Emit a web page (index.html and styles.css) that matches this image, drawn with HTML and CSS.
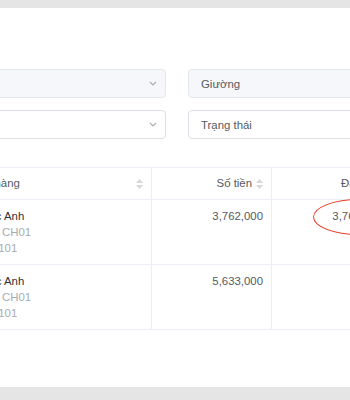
FILE: index.html
```html
<!DOCTYPE html>
<html lang="vi">
<head>
    <meta charset="UTF-8">
    <meta name="viewport" content="width=device-width, initial-scale=1.0">
    <title>Hợp đồng</title>
    <link rel="stylesheet" href="styles.css">
</head>
<body>
    <div class="panel">
        <div class="filters">
            <div class="select is-disabled">
                <span class="select-value"></span>
                <svg class="chevron" width="8" height="5" viewBox="0 0 8 5"><polyline points="1,1 4,4 7,1" fill="none" stroke="#a8abb2" stroke-width="1.1"/></svg>
            </div>
            <div class="field is-disabled">Giường</div>

            <div class="select">
                <span class="select-value"></span>
                <svg class="chevron" width="8" height="5" viewBox="0 0 8 5"><polyline points="1,1 4,4 7,1" fill="none" stroke="#a8abb2" stroke-width="1.1"/></svg>
            </div>
            <div class="field">Trạng thái</div>
        </div>

        <table class="data-table">
            <colgroup>
                <col class="col-customer">
                <col class="col-money">
                <col class="col-money">
                <col class="col-money">
            </colgroup>
            <thead>
                <tr>
                    <th>
                        <div class="th-inner">
                            <span>Khách hàng</span>
                            <svg class="sort" width="7" height="10" viewBox="0 0 7 10"><polygon points="3.5,0 7,4 0,4" fill="#d4d7de"/><polygon points="0,6 7,6 3.5,10" fill="#d4d7de"/></svg>
                        </div>
                    </th>
                    <th class="num">
                        <div class="th-inner">
                            <span>Số tiền</span>
                            <svg class="sort" width="7" height="10" viewBox="0 0 7 10"><polygon points="3.5,0 7,4 0,4" fill="#d4d7de"/><polygon points="0,6 7,6 3.5,10" fill="#d4d7de"/></svg>
                        </div>
                    </th>
                    <th class="num">
                        <div class="th-inner">
                            <span>Đã trả</span>
                            <svg class="sort" width="7" height="10" viewBox="0 0 7 10"><polygon points="3.5,0 7,4 0,4" fill="#d4d7de"/><polygon points="0,6 7,6 3.5,10" fill="#d4d7de"/></svg>
                        </div>
                    </th>
                    <th class="num"></th>
                </tr>
            </thead>
            <tbody>
                <tr>
                    <td>
                        <div class="name">Lê Ngọc Anh</div>
                        <div class="meta">Căn hộ: CH01</div>
                        <div class="meta">Phòng: 101</div>
                    </td>
                    <td class="num">3,762,000</td>
                    <td class="num marked">
                        3,762,000
                        <span class="ring"></span>
                    </td>
                    <td class="num"></td>
                </tr>
                <tr>
                    <td>
                        <div class="name">Lê Ngọc Anh</div>
                        <div class="meta">Căn hộ: CH01</div>
                        <div class="meta">Phòng: 101</div>
                    </td>
                    <td class="num">5,633,000</td>
                    <td class="num"></td>
                    <td class="num"></td>
                </tr>
            </tbody>
        </table>
    </div>
</body>
</html>
```

FILE: styles.css
```css
body {
    margin: 0;
    background-color: #e5e5e5;
    font-family: "Liberation Sans", Arial, sans-serif;
    font-size: 11.4px;
    color: #606266;
    height: 400px;
    overflow: hidden;
}

.panel {
    background-color: white;
    margin: 8px 0 0 -66px;
    width: 640px;
    height: 379px;
    padding: 61px 16px 0;
    box-sizing: border-box;
}

.filters {
    display: grid;
    grid-template-columns: 200px 200px;
    gap: 12px 22px;
    margin-left: 16px;
}

.select,
.field {
    height: 29px;
    box-sizing: border-box;
    border: 1px solid #dcdfe6;
    border-radius: 4px;
    background-color: white;
    display: flex;
    align-items: center;
    padding: 0 8px 0 12px;
}

.select {
    justify-content: space-between;
}

.is-disabled {
    background-color: #f5f7fa;
    border-color: #e4e7ed;
}

.field {
    color: #555a61;
}

.chevron {
    display: block;
}

.data-table {
    margin-top: 28px;
    border-collapse: separate;
    border-spacing: 0;
    table-layout: fixed;
    width: 562px;
    border-top: 1px solid #ebeef5;
    border-left: 1px solid #ebeef5;
}

.col-customer {
    width: 201px;
}

.col-money {
    width: 120px;
}

.data-table th,
.data-table td {
    border-right: 1px solid #ebeef5;
    border-bottom: 1px solid #ebeef5;
    padding: 8px;
    text-align: left;
    vertical-align: top;
}

.data-table th {
    font-weight: normal;
    line-height: 15px;
    color: #555a61;
}

.data-table td {
    line-height: 16px;
    color: #555a61;
}

.th-inner {
    display: flex;
    align-items: center;
    justify-content: space-between;
    gap: 4px;
}

.data-table .num {
    text-align: right;
}

.num .th-inner {
    justify-content: flex-end;
}

.sort {
    display: block;
}

.data-table .name {
    color: #303133;
}

.data-table .meta {
    color: #a8abb2;
}

.marked {
    position: relative;
}

/* red annotation drawn over the amount */
.ring {
    position: absolute;
    left: 41px;
    top: -1px;
    width: 92px;
    height: 36px;
    box-sizing: border-box;
    border: 1.5px solid #e8412c;
    border-radius: 50%;
}
```
